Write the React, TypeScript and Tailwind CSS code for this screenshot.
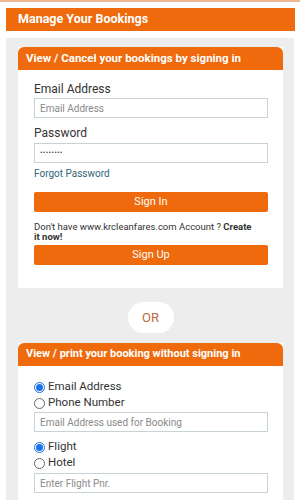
import React from 'react';

const Radio: React.FC<{ checked?: boolean; label: string }> = ({ checked, label }) => (
  <label className="flex items-center h-[16px] text-[11.5px] text-[#333]">
    <span
      className={
        checked
          ? 'w-[11px] h-[11px] rounded-full border border-[#1a73e8] flex items-center justify-center bg-white'
          : 'w-[11px] h-[11px] rounded-full border border-[#666] bg-white'
      }
    >
      {checked && <span className="w-[7px] h-[7px] rounded-full bg-[#1a73e8]" />}
    </span>
    <span className="ml-[3px]">{label}</span>
  </label>
);

const Input: React.FC<{ placeholder: string; value?: string }> = ({ placeholder, value }) => (
  <div className="h-[20px] border border-[#c7d3d8] bg-white flex items-center px-[5px] text-[10px]">
    {value ? (
      <span className="text-[#444] text-[7.5px] tracking-[0.3px]">{value}</span>
    ) : (
      <span className="text-[#8a8a8a]">{placeholder}</span>
    )}
  </div>
);

export default function App() {
  return (
    <div className="w-[300px] h-[500px] overflow-hidden bg-white border-t-2 border-[#f0b890]" style={{ fontFamily: 'Roboto, "Liberation Sans", sans-serif' }}>
      {/* Page title */}
      <div className="ml-[6px] mr-[5px] mt-[6px] h-[23px] bg-[#ee6a0c] flex items-center pl-[12px] text-white font-bold text-[12.5px]">
        Manage Your Bookings
      </div>

      {/* Gray panel */}
      <div className="mt-[7px] mx-[6px] bg-[#ededed] pl-[12px] pr-[11px] pt-[9px] pb-[20px]">
        {/* Sign in card */}
        <div className="bg-white">
          <div className="h-[23px] bg-[#ee6a0c] rounded-t-[6px] flex items-center pl-[8px] text-white font-bold text-[11.5px]">
            View / Cancel your bookings by signing in
          </div>
          <div className="pl-[16px] pr-[15px] pt-[12px] pb-[23px]">
            <div className="text-[12px] text-[#333] leading-[14px]">Email Address</div>
            <div className="mt-[2px]">
              <Input placeholder="Email Address" />
            </div>
            <div className="mt-[8px] text-[12px] text-[#333] leading-[14px]">Password</div>
            <div className="mt-[3px]">
              <Input placeholder="Password" value="••••••••" />
            </div>
            <div className="mt-[5px] text-[10px] text-[#2f6578] leading-[12px]">Forgot Password</div>
            <button className="mt-[12px] w-full h-[20px] bg-[#ee6a0c] rounded-[2px] text-white text-[11px] flex items-center justify-center">
              Sign In
            </button>
            <div className="mt-[10px] text-[9.5px] leading-[10px] text-[#333]">
              <div className="whitespace-nowrap">
                Don't have www.krcleanfares.com Account ? <b>Create</b>
              </div>
              <div className="font-bold">it now!</div>
            </div>
            <button className="mt-[3px] w-full h-[20px] bg-[#ee6a0c] rounded-[2px] text-white text-[11px] flex items-center justify-center">
              Sign Up
            </button>
          </div>
        </div>

        {/* OR */}
        <div className="flex justify-center mt-[14px]">
          <div className="w-[46px] h-[31px] rounded-full bg-white flex items-center justify-center text-[13px] text-[#b96a40]">
            OR
          </div>
        </div>

        {/* Without sign in card */}
        <div className="bg-white mt-[10px]">
          <div className="h-[23px] bg-[#ee6a0c] rounded-t-[6px] flex items-center pl-[8px] text-white font-bold text-[11px]">
            View / print your booking without signing in
          </div>
          <div className="pl-[16px] pr-[15px] pt-[13px] pb-[10px]">
            <Radio checked label="Email Address" />
            <Radio label="Phone Number" />
            <div className="mt-[1px]">
              <Input placeholder="Email Address used for Booking" />
            </div>
            <div className="mt-[7px]">
              <Radio checked label="Flight" />
              <Radio label="Hotel" />
            </div>
            <div className="mt-[2px]">
              <Input placeholder="Enter Flight Pnr." />
            </div>
          </div>
        </div>
      </div>
    </div>
  );
}
